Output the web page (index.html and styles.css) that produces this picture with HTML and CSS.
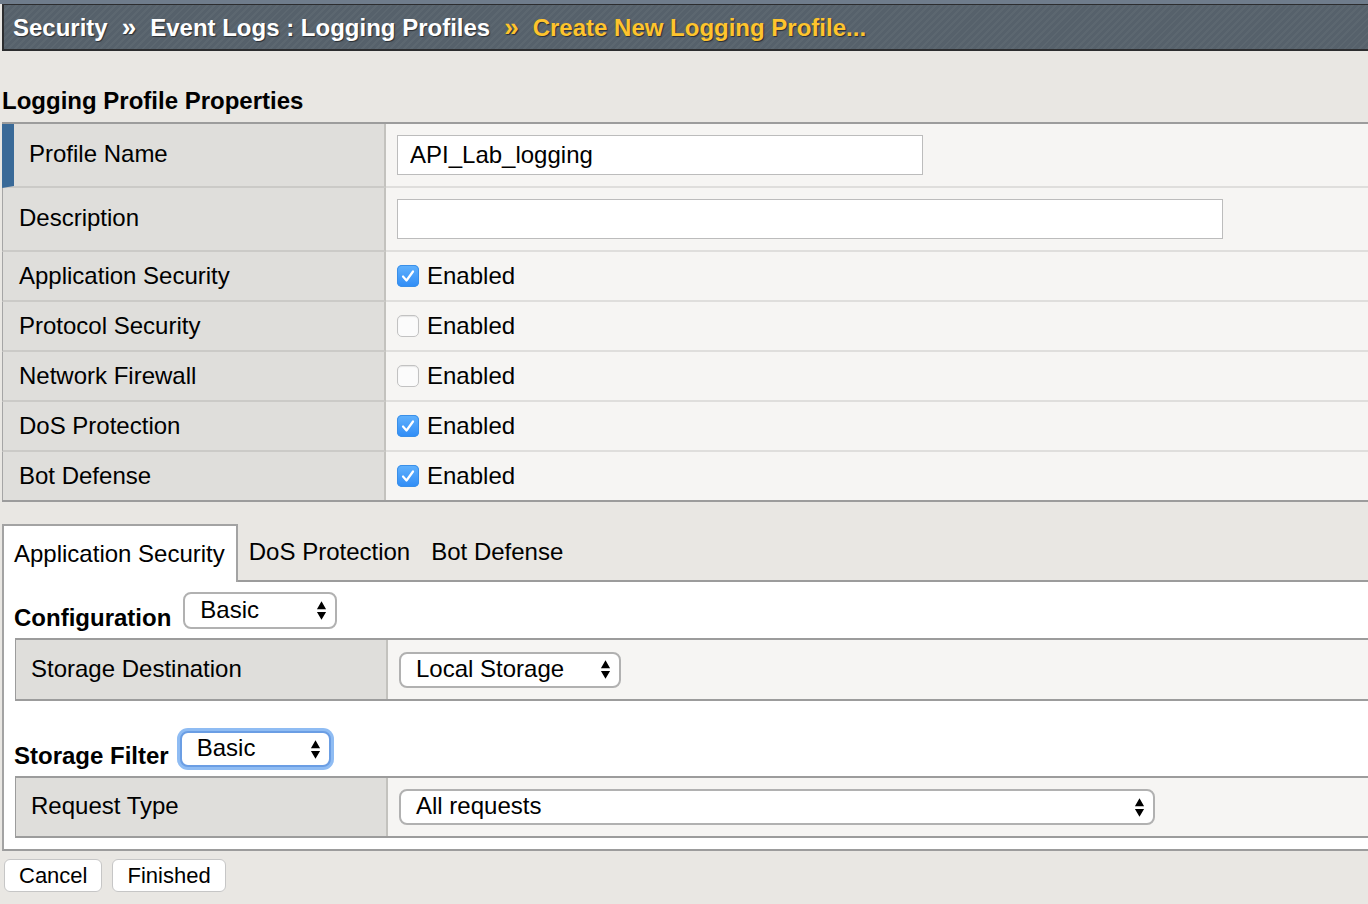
FILE: index.html
```html
<!DOCTYPE html>
<html lang="en">
<head>
<meta charset="utf-8">
<title>Create New Logging Profile</title>
<link rel="stylesheet" href="styles.css">
</head>
<body>
<div class="topstrip"></div>
<div class="crumbs">
  <span class="crumb">Security</span><span class="sep">»</span><span class="crumb">Event Logs : Logging Profiles</span><span class="sep current">»</span><span class="crumb current">Create New Logging Profile...</span>
</div>

<h2 class="section-title">Logging Profile Properties</h2>

<div class="props">
  <div class="row tall">
    <div class="label first">Profile Name</div>
    <div class="value"><input class="text-input name" type="text" value="API_Lab_logging"></div>
  </div>
  <div class="row tall">
    <div class="label">Description</div>
    <div class="value"><input class="text-input desc" type="text" value=""></div>
  </div>
  <div class="row">
    <div class="label">Application Security</div>
    <div class="value"><span class="cb on"><svg viewBox="0 0 22 22" width="22" height="22"><path d="M6 11.5 L9.5 15.5 L16 6.5" fill="none" stroke="#fff" stroke-width="2.2" stroke-linecap="round" stroke-linejoin="round"/></svg></span><span class="cb-label">Enabled</span></div>
  </div>
  <div class="row">
    <div class="label">Protocol Security</div>
    <div class="value"><span class="cb off"></span><span class="cb-label">Enabled</span></div>
  </div>
  <div class="row">
    <div class="label">Network Firewall</div>
    <div class="value"><span class="cb off"></span><span class="cb-label">Enabled</span></div>
  </div>
  <div class="row">
    <div class="label">DoS Protection</div>
    <div class="value"><span class="cb on"><svg viewBox="0 0 22 22" width="22" height="22"><path d="M6 11.5 L9.5 15.5 L16 6.5" fill="none" stroke="#fff" stroke-width="2.2" stroke-linecap="round" stroke-linejoin="round"/></svg></span><span class="cb-label">Enabled</span></div>
  </div>
  <div class="row last">
    <div class="label">Bot Defense</div>
    <div class="value"><span class="cb on"><svg viewBox="0 0 22 22" width="22" height="22"><path d="M6 11.5 L9.5 15.5 L16 6.5" fill="none" stroke="#fff" stroke-width="2.2" stroke-linecap="round" stroke-linejoin="round"/></svg></span><span class="cb-label">Enabled</span></div>
  </div>
</div>

<div class="tabs">
  <div class="tab active">Application Security</div>
  <div class="tab">DoS Protection</div>
  <div class="tab">Bot Defense</div>
  <div class="tab-fill"></div>
</div>

<div class="panel">
  <div class="field-row cfg">
    <span class="field-label">Configuration</span>
    <div class="select w-cfg"><span>Basic</span><svg class="arrows" viewBox="0 0 12 21" width="11" height="21"><path d="M6 0.5 L11 9 H1 Z M6 20.5 L11 12 H1 Z"/></svg></div>
  </div>

  <div class="subtable">
    <div class="label">Storage Destination</div>
    <div class="value"><div class="select w-dest"><span>Local Storage</span><svg class="arrows" viewBox="0 0 12 21" width="11" height="21"><path d="M6 0.5 L11 9 H1 Z M6 20.5 L11 12 H1 Z"/></svg></div></div>
  </div>

  <div class="field-row filter">
    <span class="field-label">Storage Filter</span>
    <div class="select focus w-filter"><span>Basic</span><svg class="arrows" viewBox="0 0 12 21" width="11" height="21"><path d="M6 0.5 L11 9 H1 Z M6 20.5 L11 12 H1 Z"/></svg></div>
  </div>

  <div class="subtable req">
    <div class="label">Request Type</div>
    <div class="value"><div class="select w-req"><span>All requests</span><svg class="arrows" viewBox="0 0 12 21" width="11" height="21"><path d="M6 0.5 L11 9 H1 Z M6 20.5 L11 12 H1 Z"/></svg></div></div>
  </div>
</div>

<div class="buttons">
  <button class="btn" type="button">Cancel</button>
  <button class="btn" type="button">Finished</button>
</div>
</body>
</html>
```

FILE: styles.css
```css
html, body {
  margin: 0;
  padding: 0;
}
body {
  background: #e9e7e3;
  font-family: "Liberation Sans", Arial, Helvetica, sans-serif;
  font-size: 24px;
  color: #000;
  width: 1368px;
  overflow: hidden;
}

.topstrip {
  height: 4px;
  background: #6f7c8b;
}

.crumbs {
  margin-left: 2px;
  height: 44px;
  line-height: 44px;
  border-style: solid;
  border-color: #2c2d2f;
  border-width: 1px 0 2px 2px;
  padding-left: 9px;
  background-color: #56616b;
  background-image: repeating-linear-gradient(135deg, #56616b 0px, #56616b 3px, #5c6770 3px, #5c6770 5px);
  color: #fff;
  font-weight: bold;
  font-size: 24px;
  white-space: nowrap;
  text-shadow: 1px 1px 1px #2a2f35;
}
.crumbs .sep {
  margin: 0 14px;
  font-size: 26px;
}
.crumbs .current {
  color: #fec42d;
}

.section-title {
  margin: 36px 0 7px 2px;
  font-size: 24px;
  line-height: 28px;
  font-weight: bold;
}

.props {
  margin-left: 2px;
  border-top: 2px solid #9c9c9c;
  border-bottom: 2px solid #9c9c9c;
}
.row {
  display: grid;
  grid-template-columns: 384px 1fr;
  height: 50px;
}
.row.tall {
  height: 64px;
}
.row.last {
  height: 48px;
}
.label {
  box-sizing: border-box;
  background: #dfdedb;
  border-left: 1px solid #a5a5a5;
  border-right: 2px solid #c3c2be;
  border-bottom: 2px solid #cbcac7;
  padding-left: 16px;
  display: flex;
  align-items: center;
}
.row.tall .label {
  padding-bottom: 3px;
}
.label.first {
  border-left: 12px solid #3a6a98;
  padding-left: 15px;
}
.value {
  box-sizing: border-box;
  background: #f6f5f3;
  border-bottom: 2px solid #dfdedc;
  padding-left: 11px;
  display: flex;
  align-items: center;
}
.row.last .label,
.row.last .value {
  border-bottom: 0;
}

.text-input {
  box-sizing: border-box;
  height: 40px;
  border: 1px solid #bcbcbc;
  background: #fff;
  font-family: inherit;
  font-size: 24px;
  padding: 0 12px;
  color: #000;
  outline: none;
  margin: 0;
}
.text-input.name { width: 526px; }
.text-input.desc { width: 826px; }

.cb {
  box-sizing: border-box;
  width: 22px;
  height: 22px;
  border-radius: 5px;
  display: inline-block;
  flex: none;
}
.cb svg { display: block; }
.cb.on {
  background: linear-gradient(#62b2fd, #2f8cf6);
  box-shadow: inset 0 0 0 1px #3a8fe8;
}
.cb.off {
  background: #fbfbfb;
  border: 1px solid #c2c2c2;
  box-shadow: inset 0 1px 1px #e6e6e6;
}
.cb-label {
  margin-left: 8px;
}

.tabs {
  display: flex;
  margin-top: 22px;
  margin-left: 2px;
  height: 58px;
}
.tab {
  box-sizing: border-box;
  display: flex;
  align-items: center;
  padding: 0 10px 0 11px;
  border-bottom: 2px solid #9c9c9c;
}
.tab.active {
  background: #fff;
  border: 2px solid #a3a3a3;
  border-bottom: 0;
  padding: 0 11px 0 10px;
}
.tab-fill {
  flex: 1;
  border-bottom: 2px solid #9c9c9c;
}

.panel {
  margin-left: 2px;
  background: #fff;
  border-left: 2px solid #a3a3a3;
  border-bottom: 2px solid #9c9c9c;
  padding: 10px 0 11px 10px;
}
.field-row {
  display: flex;
  align-items: flex-start;
}
.field-label {
  font-weight: bold;
  line-height: 28px;
}
.field-row.cfg .field-label {
  margin-top: 12px;
  margin-right: 12px;
}
.field-row.filter {
  margin-top: 27px;
}
.field-row.filter .field-label {
  margin-top: 14px;
  margin-right: 11px;
}

.select {
  box-sizing: border-box;
  display: flex;
  align-items: center;
  justify-content: space-between;
  height: 37px;
  border: 2px solid #b1b1b1;
  border-radius: 8px;
  background: #fff;
  padding: 0 8px 0 15px;
  white-space: nowrap;
}
.select span {
  margin-top: -2px;
}
.select .arrows {
  display: block;
  fill: #000;
}
.select.focus {
  border-color: #6b9ee4;
  box-shadow: 0 0 0 3px #8fbcf3;
  height: 36px;
}
.w-cfg { width: 154px; }
.w-dest { width: 222px; height: 36px; }
.w-filter { width: 151px; margin-top: 3px; }
.w-req { width: 756px; height: 36px; }

.subtable {
  display: grid;
  grid-template-columns: 373px 1fr;
  height: 59px;
  margin-top: 6px;
  margin-left: 1px;
  border-top: 2px solid #9c9c9c;
  border-bottom: 2px solid #9c9c9c;
}
.subtable .label,
.subtable .value {
  border-bottom: 0;
}
.subtable .label {
  border-left: 1px solid #9c9c9c;
  padding-left: 15px;
  padding-bottom: 2px;
}
.subtable.req {
  margin-top: 6px;
  height: 58px;
}

.buttons {
  display: flex;
  gap: 10px;
  margin: 8px 0 0 4px;
}
.btn {
  box-sizing: border-box;
  height: 33px;
  padding: 0 14px;
  border: 1px solid #c6c6c6;
  border-radius: 6px;
  background: #fff;
  font-family: inherit;
  font-size: 22px;
  color: #000;
  line-height: 31px;
}
```
